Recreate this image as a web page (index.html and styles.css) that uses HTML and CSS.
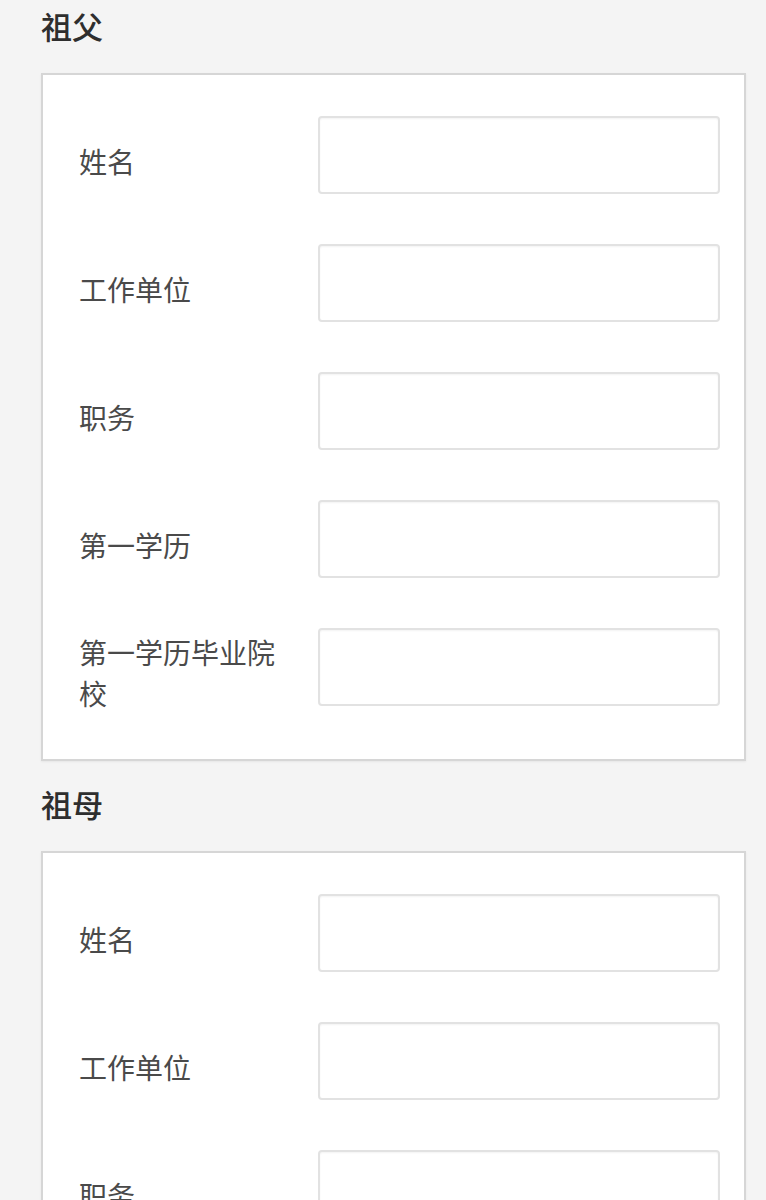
FILE: index.html
```html
<!DOCTYPE html>
<html lang="zh">
<head>
<meta charset="utf-8">
<link rel="stylesheet" href="styles.css">
<title>表单</title>
</head>
<body>
<div class="page">
  <h2 class="section-title">祖父</h2>
  <div class="card">
    <div class="row"><label class="label">姓名</label><input class="field" type="text"></div>
    <div class="row"><label class="label">工作单位</label><input class="field" type="text"></div>
    <div class="row"><label class="label">职务</label><input class="field" type="text"></div>
    <div class="row"><label class="label">第一学历</label><input class="field" type="text"></div>
    <div class="row"><label class="label">第一学历毕业院校</label><input class="field" type="text"></div>
  </div>
  <h2 class="section-title">祖母</h2>
  <div class="card">
    <div class="row"><label class="label">姓名</label><input class="field" type="text"></div>
    <div class="row"><label class="label">工作单位</label><input class="field" type="text"></div>
    <div class="row"><label class="label">职务</label><input class="field" type="text"></div>
    <div class="row"><label class="label">第一学历</label><input class="field" type="text"></div>
    <div class="row"><label class="label">第一学历毕业院校</label><input class="field" type="text"></div>
  </div>
</div>
</body>
</html>
```
FILE: styles.css
```css
html, body {
  margin: 0;
  padding: 0;
  background: #f4f4f4;
  font-family: "Noto Sans CJK SC", "Noto Sans", sans-serif;
}
.page {
  padding: 6px 20px 40px 41px;
}
.section-title {
  margin: 0;
  height: 40px;
  line-height: 40px;
  font-size: 31px;
  font-weight: 500;
  color: #2e2e2e;
}
.card + .section-title {
  margin-top: 23px;
}
.section-title + .card {
  margin-top: 27px;
}
.card {
  background: #fff;
  border: 2px solid #d6d6d6;
  box-shadow: 0 1px 2px rgba(0,0,0,0.06);
  padding: 41px 24px 53px 36px;
  display: flex;
  flex-direction: column;
  gap: 50px;
}
.row {
  display: grid;
  grid-template-columns: 210px 1fr;
  column-gap: 29px;
  align-items: center;
}
.label {
  font-size: 28px;
  line-height: 41px;
  color: #4a4a4a;
  margin: 2px 0 -10px;
}
.field {
  box-sizing: border-box;
  height: 78px;
  width: 100%;
  border: 2px solid #e2e2e2;
  border-radius: 4px;
  background: #fff;
  box-shadow: inset 0 1px 2px rgba(0,0,0,0.05);
  margin: 0;
  padding: 0 12px;
  font-size: 26px;
}
```
